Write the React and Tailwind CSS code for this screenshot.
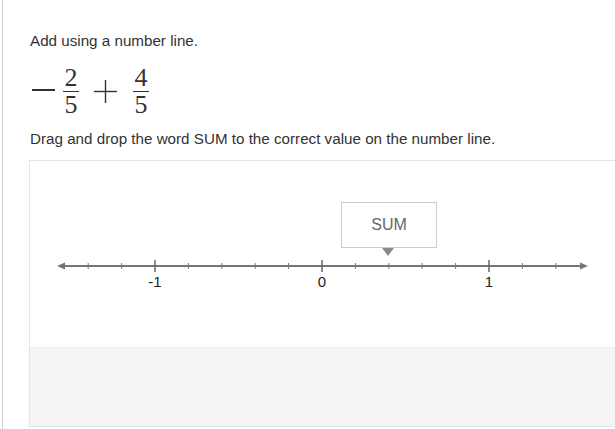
import React from "react";

function Frac({ n, d }) {
  return (
    <div className="flex flex-col items-center w-[16px]">
      <div className="h-[26px] leading-[26px] text-[26px]">{n}</div>
      <div className="h-px w-[16px] bg-[#333]" />
      <div className="h-[26px] leading-[26px] text-[26px]">{d}</div>
    </div>
  );
}

function NumberLine() {
  const unit = 167;
  const zero = 292;
  const y = 105;
  const minors = [];
  for (let i = -7; i <= 7; i++) {
    if (i % 5 === 0) continue;
    minors.push(zero + (unit * i) / 5);
  }
  const majors = [
    { x: zero - unit, l: "-1" },
    { x: zero, l: "0" },
    { x: zero + unit, l: "1" },
  ];
  return (
    <svg width="586" height="186" className="block">
      <line x1="32" y1={y} x2="553" y2={y} stroke="#757575" strokeWidth="2" />
      <polygon points={`27,${y} 35,${y - 3.5} 35,${y + 3.5}`} fill="#757575" />
      <polygon points={`558,${y} 550,${y - 3.5} 550,${y + 3.5}`} fill="#757575" />
      {minors.map((x) => (
        <line key={x} x1={x} y1={y - 3} x2={x} y2={y + 3} stroke="#777" strokeWidth="1" />
      ))}
      {majors.map((m) => (
        <g key={m.l}>
          <line x1={m.x} y1={y - 6} x2={m.x} y2={y + 6} stroke="#666" strokeWidth="1.5" />
          <text
            x={m.x}
            y={y + 21}
            textAnchor="middle"
            fontSize="15"
            fill="#222"
            fontFamily="'Liberation Sans', Arial, sans-serif"
          >
            {m.l}
          </text>
        </g>
      ))}
    </svg>
  );
}

export default function App() {
  return (
    <div className="w-[615px] h-[429px] overflow-hidden bg-white pl-[2px] font-[Liberation_Sans,Arial,sans-serif]">
      <div className="h-[429px] border-l border-[#cfcfcf] pl-[26px] pt-[31px]">
        <div className="pl-px text-[15.2px] leading-[20px] text-[#333]">Add using a number line.</div>
        <div className="mt-[14px] pl-[3px] flex items-center h-[53px] text-[#333] font-[Liberation_Serif,Times_New_Roman,serif]">
          <div className="w-[23px] h-[1.5px] bg-[#333] mb-[3px]" />
          <div className="ml-[8px]">
            <Frac n="2" d="5" />
          </div>
          <svg width="23" height="23" className="ml-[15px]" viewBox="0 0 23 23">
            <line x1="0" y1="11.5" x2="23" y2="11.5" stroke="#333" strokeWidth="1.4" />
            <line x1="11.5" y1="0" x2="11.5" y2="23" stroke="#333" strokeWidth="1.4" />
          </svg>
          <div className="ml-[16px]">
            <Frac n="4" d="5" />
          </div>
        </div>
        <div className="mt-[11px] pl-px text-[15.2px] leading-[20px] text-[#333]">
          Drag and drop the word SUM to the correct value on the number line.
        </div>
        <div className="mt-[11px] w-[620px] border border-[#e4e4e4]">
          <div className="relative h-[186px] bg-white">
            <NumberLine />
            <div className="absolute left-[311px] top-[41px] w-[96px] h-[46px] border border-[#cccccc] bg-white flex items-center justify-center text-[16px] text-[#666]">
              SUM
            </div>
            <div className="absolute left-[352px] top-[87px] w-0 h-0 border-l-[6px] border-r-[6px] border-t-[8px] border-l-transparent border-r-transparent border-t-[#8a8a8a]" />
          </div>
          <div className="h-[79px] bg-[#f5f5f5] border-t border-[#eeeeee]" />
        </div>
      </div>
    </div>
  );
}
